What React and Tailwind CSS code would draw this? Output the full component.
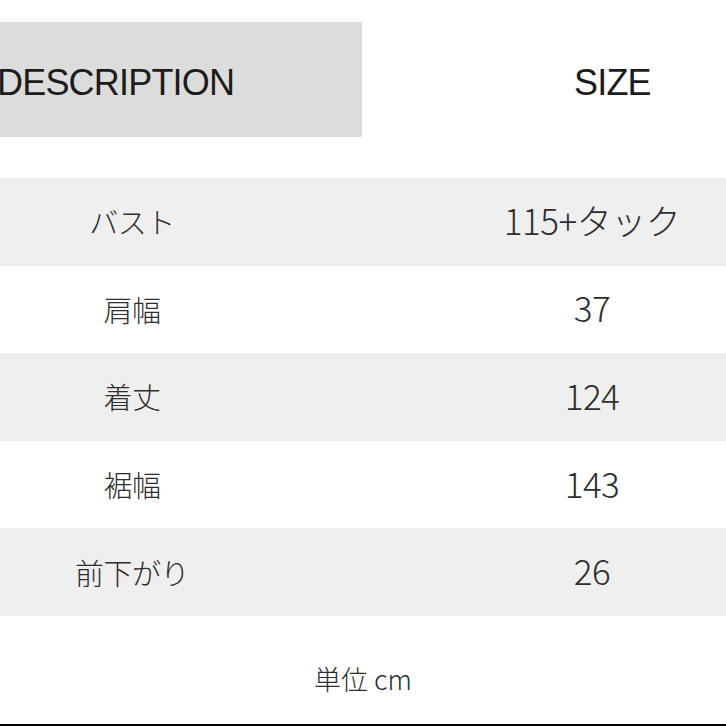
import React from "react";

const rows = [
  { label: "バスト", value: "115+タック", gray: true },
  { label: "肩幅", value: "37", gray: false },
  { label: "着丈", value: "124", gray: true },
  { label: "裾幅", value: "143", gray: false },
  { label: "前下がり", value: "26", gray: true },
];

const latin = { fontFamily: '"Liberation Sans", "Noto Sans CJK JP", sans-serif' };
const cjk = { fontFamily: '"Noto Sans CJK JP", "Liberation Sans", sans-serif' };

export default function App() {
  return (
    <div className="w-[726px] h-[726px] bg-white overflow-hidden flex flex-col text-[#2e2e2e]" style={latin}>
      <div className="h-[22px] shrink-0" />
      <div className="flex h-[115px] shrink-0">
        <div className="w-[362px] shrink-0 h-full bg-[#dcdcdc] flex items-center overflow-hidden">
          <span className="ml-[-3px] text-[36px] tracking-[-0.8px] leading-none text-[#1c1c1c] pt-[6px] whitespace-nowrap">DESCRIPTION</span>
        </div>
        <div className="flex-1 flex items-center pl-[212px]">
          <span className="text-[36px] tracking-[-0.8px] leading-none text-[#1c1c1c] pt-[6px]">SIZE</span>
        </div>
      </div>
      <div className="h-[41px] shrink-0" />
      {rows.map((r, i) => (
        <div key={i} className={`flex shrink-0 h-[87.6px] items-center ${r.gray ? "bg-[#efefef]" : "bg-white"}`} style={cjk}>
          <div className="w-[264px] shrink-0 flex justify-center">
            <span className="text-[29px] font-light tracking-[-0.5px] leading-none">{r.label}</span>
          </div>
          <div className="w-[256px] shrink-0 ml-[200px] flex justify-center">
            <span className="text-[35px] font-light tracking-[-0.5px] leading-none mt-[-5px]">{r.value}</span>
          </div>
        </div>
      ))}
      <div className="flex-1 flex items-center justify-center" style={cjk}>
        <span className="text-[27px] font-light leading-none mt-[18px]">単位 cm</span>
      </div>
      <div className="h-[2px] shrink-0 bg-black" />
    </div>
  );
}
